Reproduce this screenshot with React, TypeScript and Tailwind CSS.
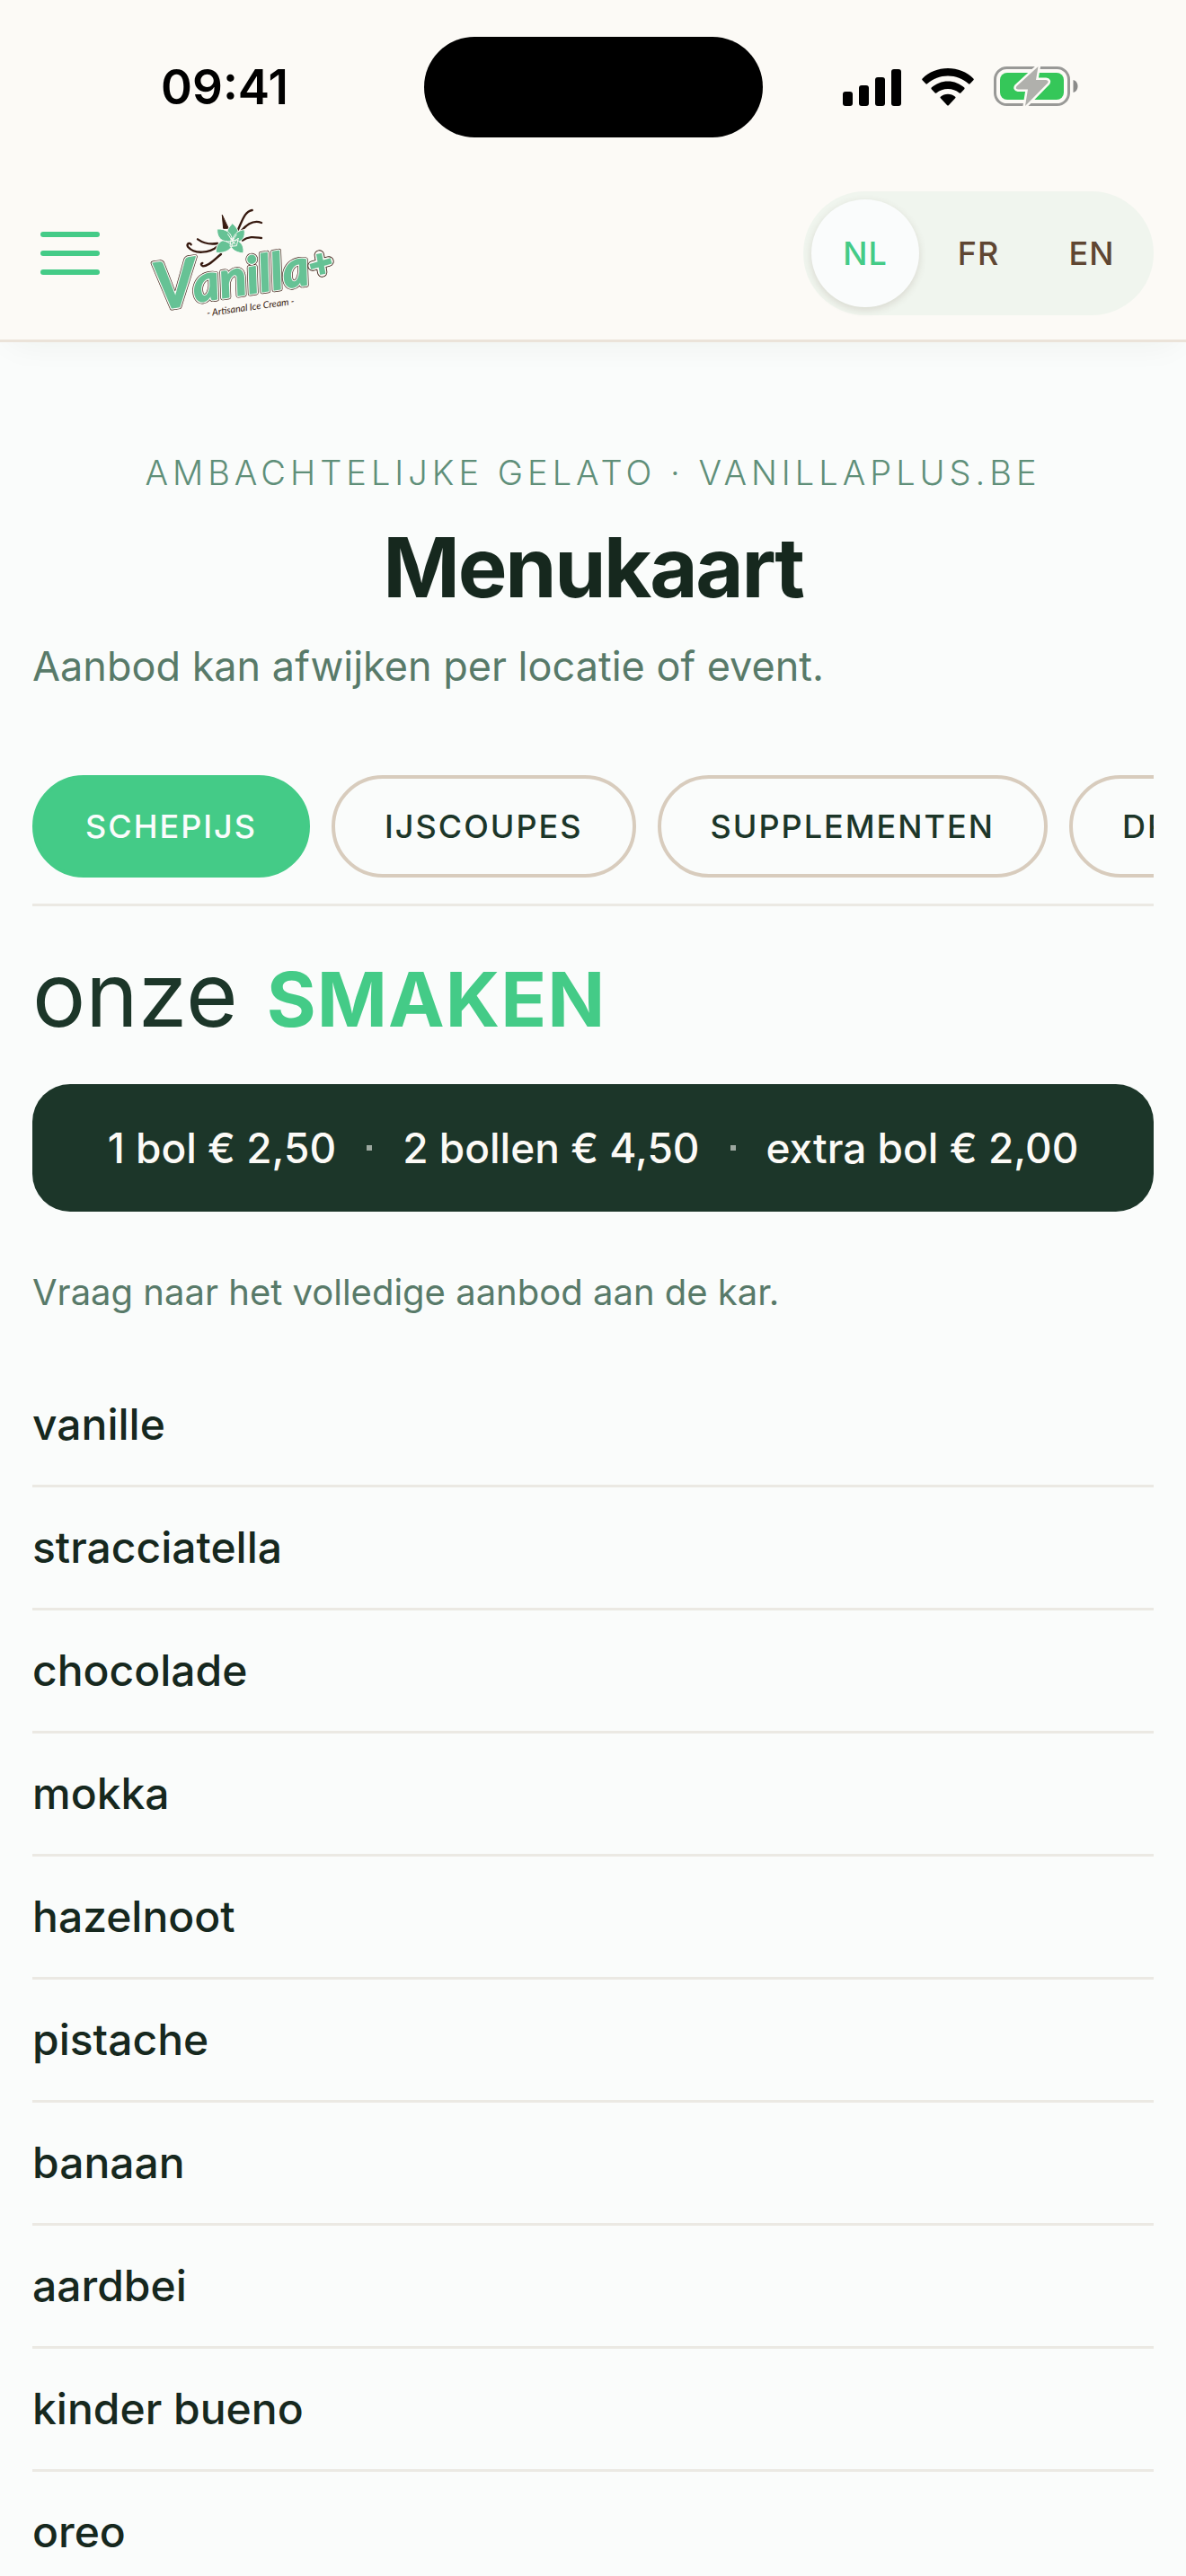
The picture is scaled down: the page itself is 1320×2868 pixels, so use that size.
import React, { useState } from 'react';

const LANGUAGES = ['NL', 'FR', 'EN'];

const CATEGORIES = ['Schepijs', 'IJscoupes', 'Supplementen', 'Dranken'];

const PRICES = ['1 bol € 2,50', '2 bollen € 4,50', 'extra bol € 2,00'];

const FLAVOURS = [
  'vanille',
  'stracciatella',
  'chocolade',
  'mokka',
  'hazelnoot',
  'pistache',
  'banaan',
  'aardbei',
  'kinder bueno',
  'oreo',
];

const SignalIcon = () => (
  <svg className="w-[66px] h-[42px]" viewBox="0 0 66 42" aria-hidden="true">
    <rect x="0" y="26" width="11" height="16" rx="3" />
    <rect x="18" y="19" width="11" height="23" rx="3" />
    <rect x="36" y="10" width="11" height="32" rx="3" />
    <rect x="54" y="1" width="11" height="41" rx="3" />
  </svg>
);

const WifiIcon = () => (
  <svg className="w-[58px] h-[42px]" viewBox="0 0 58 42" aria-hidden="true">
    <path d="M29 0C40 0 50 4 57.4 11.4Q58.2 12.3 57.4 13.2L53.6 17.3Q52.8 18 52 17.3C45.5 11.5 37.5 8.6 29 8.6S12.5 11.5 6 17.3Q5.2 18 4.4 17.3L.6 13.2Q-.2 12.3 .6 11.4C8 4 18 0 29 0Z" />
    <path d="M29 14.4C36 14.4 42.4 17 47.3 21.6Q48 22.4 47.3 23.2L43.3 27.5Q42.5 28.2 41.7 27.5C38.2 24.5 33.8 22.9 29 22.9S19.8 24.5 16.3 27.5Q15.5 28.2 14.7 27.5L10.7 23.2Q10 22.4 10.7 21.6C15.6 17 22 14.4 29 14.4Z" />
    <path d="M29 28.7C32.2 28.7 35 29.8 37.2 31.7Q38 32.5 37.2 33.3L29.8 41.2Q29 41.9 28.2 41.2L20.8 33.3Q20 32.5 20.8 31.7C23 29.8 25.8 28.7 29 28.7Z" />
  </svg>
);

const BatteryIcon = () => (
  <svg className="w-[94px] h-[46px]" viewBox="0 0 94 46" aria-hidden="true">
    <rect x="1.5" y="1.5" width="82" height="41" rx="13" fill="none" stroke="#999997" strokeWidth="3" />
    <path d="M88.5 15C92 16 93.5 19 93.5 22S92 28 88.5 29Z" fill="#8b8b8a" />
    <rect x="7" y="7" width="71" height="30" rx="8" fill="#35c759" />
    <path
      d="M49.5 0L25.5 22Q23.5 25 27 25.5H38L35 44L60 18.5Q62 15.5 58 15H47L49.5 0Z"
      fill="#b0b0ac"
      stroke="#fcfaf6"
      strokeWidth="5"
      strokeLinejoin="round"
      paintOrder="stroke"
    />
  </svg>
);

const Logo = () => (
  <svg className="w-[205px] h-[124px] overflow-visible" viewBox="50 48 615 372" role="img" aria-label="Vanilla+">
    {/* Vanilla pods */}
    <g fill="none" stroke="#36190f" strokeWidth="7" strokeLinecap="round">
      <path d="M288 74L292 118L308 118Z" fill="#36190f" strokeWidth="3" />
      <path d="M340 124C356 90 362 62 388 57" />
      <path d="M352 126C372 102 396 90 419 99" />
      <path d="M356 158C378 142 400 148 419 150" />
      <path d="M206 154C226 168 248 172 272 168" />
      <path d="M184 172C176 162 168 172 174 180C196 206 246 200 272 178" />
      <path d="M284 204C262 222 244 244 224 244C216 242 216 234 222 234" />
    </g>

    {/* Flower */}
    <g fill="#66c295" stroke="#fcfaf6" strokeWidth="3" strokeLinejoin="round">
      <path d="M322 101C342 118 350 138 334 160L308 158C296 138 304 120 322 101Z" />
      <path d="M362 122C366 146 358 164 326 166L324 150C332 132 344 124 362 122Z" />
      <path d="M358 201C330 198 310 184 316 160L336 156C354 166 362 180 358 201Z" />
      <path d="M267 199C266 172 282 152 312 156L324 164C322 186 302 202 267 199Z" />
      <path d="M271 120C300 118 320 132 322 160L306 162C282 160 270 146 271 120Z" />
      <path d="M306 136L322 160L336 138M300 160L320 172L342 150L336 176L314 178L318 150L332 172" fill="none" />
    </g>

    {/* Wordmark */}
    <g
      transform="rotate(-9 130 380)"
      fontFamily="Lato, 'Liberation Sans', sans-serif"
      fontStyle="italic"
      fontWeight="700"
      strokeLinejoin="round"
    >
      <g fill="#36190f" stroke="#36190f" strokeWidth="15">
        <text x="70" y="382" fontSize="218">V</text>
        <text x="200" y="376" fontSize="170">anilla</text>
      </g>
      <g fill="#fcfaf6" stroke="#fcfaf6" strokeWidth="11">
        <text x="70" y="382" fontSize="218">V</text>
        <text x="200" y="376" fontSize="170">anilla</text>
      </g>
      <g fill="#66c295" stroke="#66c295" strokeWidth="4">
        <text x="70" y="382" fontSize="218">V</text>
        <text x="200" y="376" fontSize="170">anilla</text>
      </g>
    </g>

    {/* Plus */}
    <g fill="none" strokeLinecap="round">
      <path d="M612 207L622 264M590 243L644 228" stroke="#36190f" strokeWidth="34" />
      <path d="M612 207L622 264M590 243L644 228" stroke="#fcfaf6" strokeWidth="29" />
      <path d="M611 202L624 271M582 246L652 226" stroke="#66c295" strokeWidth="19" strokeLinecap="butt" />
    </g>

    <text
      transform="rotate(-8 238 412)"
      x="238"
      y="412"
      fontFamily="Lato, 'Liberation Sans', sans-serif"
      fontStyle="italic"
      fontSize="32"
      fill="#36190f"
    >
      - Artisanal Ice Cream -
    </text>
  </svg>
);

const StatusBar = () => (
  <div className="grid grid-cols-3 h-[186px] pt-[41px] items-start">
    <div className="h-28 flex items-center justify-center pl-15">
      <span className="text-[53px] leading-none font-semibold text-black">09:41</span>
    </div>
    <div className="h-28 w-[377px] rounded-full bg-black justify-self-center" />
    <div className="h-28 flex items-center justify-center gap-[22px] pr-[62px]">
      <SignalIcon />
      <WifiIcon />
      <BatteryIcon />
    </div>
  </div>
);

const Header = () => {
  const [language, setLanguage] = useState('NL');

  return (
    <header className="relative z-10 shrink-0 bg-[#fcfaf6] border-b-[3px] border-[#ebe3d9] shadow-[0_12px_36px_-12px_rgba(28,54,41,0.06)]">
      <StatusBar />
      <div className="h-48 px-9 flex items-center justify-between">
        <div className="flex items-center gap-12">
          <button aria-label="Menu" className="w-21 h-21 flex flex-col items-center justify-center gap-[15px]">
            <span className="w-[66px] h-1.5 rounded-full bg-[#44cb87]" />
            <span className="w-[66px] h-1.5 rounded-full bg-[#44cb87]" />
            <span className="w-[66px] h-1.5 rounded-full bg-[#44cb87]" />
          </button>
          <a href="#" className="pt-[22px]">
            <Logo />
          </a>
        </div>

        <div className="flex gap-1.5 p-[9px] rounded-full bg-[#f0f5ee]">
          {LANGUAGES.map((code) => (
            <button
              key={code}
              onClick={() => setLanguage(code)}
              className={`w-30 h-30 rounded-full text-[36px] font-medium tracking-[1px] ${
                code === language
                  ? 'bg-[#fafcfc] text-[#44cb87] shadow-[0_3px_9px_rgba(92,69,51,0.16)]'
                  : 'text-[#5f4632]'
              }`}
            >
              {code}
            </button>
          ))}
        </div>
      </div>
    </header>
  );
};

const CategoryTabs = () => {
  const [active, setActive] = useState('Schepijs');

  return (
    <nav className="mt-[85px] pb-[29px] flex gap-6 overflow-hidden border-b-[3px] border-[#ebe9e3]">
      {CATEGORIES.map((category) => (
        <button
          key={category}
          onClick={() => setActive(category)}
          className={`shrink-0 h-[114px] px-[55px] rounded-full border-4 text-[36px] font-medium uppercase tracking-[2px] ${
            category === active
              ? 'bg-[#44cb87] border-[#44cb87] text-[#fafcfc]'
              : 'border-[#d8ccbd] text-[#1c3629]'
          }`}
        >
          {category}
        </button>
      ))}
    </nav>
  );
};

export default function App() {
  return (
    <div className="h-screen flex flex-col overflow-hidden bg-[#fafcfb] font-[Inter,'Liberation_Sans',sans-serif]">
      <Header />

      <main className="flex-1 min-h-0 overflow-hidden px-9 pt-[116px]">
        <p className="text-[38px] leading-[58px] text-center font-light uppercase tracking-[5px] text-[#5f8f79]">
          Ambachtelijke gelato · vanillaplus.be
        </p>
        <h1 className="mt-[27px] text-[92px] leading-[100px] text-center font-bold tracking-tight text-[#16281e]">
          Menukaart
        </h1>
        <p className="mt-6 text-[45px] leading-[72px] text-[#587a69]">
          Aanbod kan afwijken per locatie of event.
        </p>

        <CategoryTabs />

        <section>
          <h2 className="mt-[46px] flex items-baseline gap-8 leading-[105px]">
            <span className="text-[99px] text-[#1c3629]">onze</span>
            <span className="text-[84px] font-bold uppercase tracking-[1px] text-[#44cb87]">Smaken</span>
          </h2>

          <div className="mt-[42px] h-[142px] flex items-center justify-center gap-[34px] rounded-[42px] bg-[#1c3629] text-[46px] font-medium text-[#fcfaf6]">
            {PRICES.map((price, i) => (
              <React.Fragment key={price}>
                {i > 0 && <span className="w-1.5 h-1.5 bg-[#9ca79f]" />}
                <span>{price}</span>
              </React.Fragment>
            ))}
          </div>

          <p className="mt-[58px] text-[40px] leading-[64px] text-[#587a69]">
            Vraag naar het volledige aanbod aan de kar.
          </p>

          <ul className="mt-12">
            {FLAVOURS.map((flavour) => (
              <li
                key={flavour}
                className="border-b-[3px] border-[#ebe9e3] text-[48px] leading-[134px] font-medium text-[#16281e]"
              >
                {flavour}
              </li>
            ))}
          </ul>
        </section>
      </main>
    </div>
  );
}
